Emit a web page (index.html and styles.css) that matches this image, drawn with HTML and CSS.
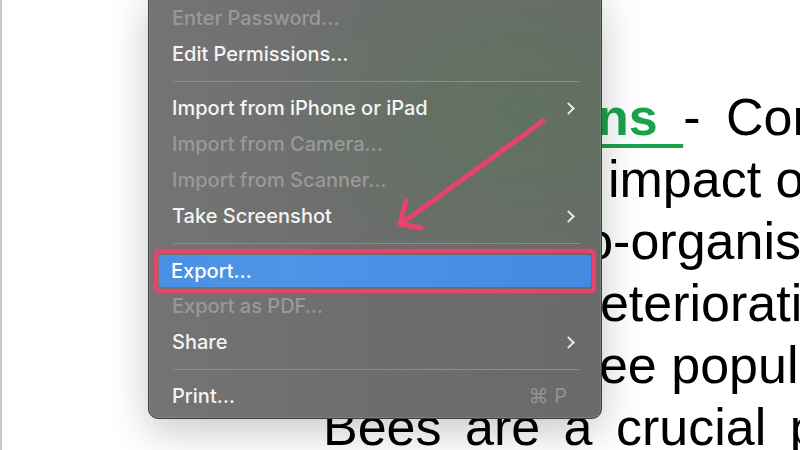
FILE: index.html
```html
<!DOCTYPE html>
<html lang="en">
<head>
<meta charset="utf-8">
<title>Export menu</title>
<link rel="stylesheet" href="styles.css">
</head>
<body>
<div class="screen">
  <div class="doc">
    <div class="ln l1"><span class="hl">ns&nbsp;</span>- Conclusions</div>
    <div class="ln l2">impact on</div>
    <div class="ln l3">micro-organisms</div>
    <div class="ln l4">deterioration</div>
    <div class="ln l5">bee population</div>
    <div class="ln l6">Bees are a crucial part</div>
  </div>

  <div class="menu">
    <div class="item off">Enter Password…</div>
    <div class="item">Edit Permissions…</div>
    <div class="sep"></div>
    <div class="item sub">Import from iPhone or iPad<span class="chev"></span></div>
    <div class="item off">Import from Camera…</div>
    <div class="item off">Import from Scanner…</div>
    <div class="item sub">Take Screenshot<span class="chev"></span></div>
    <div class="sep"></div>
    <div class="item active">Export…</div>
    <div class="item off">Export as PDF…</div>
    <div class="item sub">Share<span class="chev"></span></div>
    <div class="sep"></div>
    <div class="item">Print…<span class="key">⌘ P</span></div>
  </div>

  <svg class="arrow" width="800" height="450" viewBox="0 0 800 450">
    <g fill="none" stroke="#e8436c" stroke-width="5" stroke-linecap="round" stroke-linejoin="round">
      <path d="M541 121 L399 224"/>
      <path d="M404 201 L398 224 L419 228"/>
    </g>
  </svg>
</div>
</body>
</html>
```
FILE: styles.css
```css
* { box-sizing: border-box; }
html, body { margin: 0; padding: 0; }
body { background: #fff; }

.screen {
  position: relative;
  width: 800px;
  height: 450px;
  overflow: hidden;
  background: #fff;
  border-left: 2px solid #c8c8c8;
}

.doc {
  padding-top: 86px;
  font-family: "Liberation Sans", Arial, sans-serif;
  font-size: 52px;
  line-height: 62px;
  color: #000;
}
.ln { white-space: nowrap; }
.l1 { margin-left: 595px; word-spacing: 11px; }
.l2 { margin-left: 606px; }
.l3 { margin-left: 484px; }
.l4 { margin-left: 569px; }
.l5 { margin-left: 568px; }
.l6 { margin-left: 321px; word-spacing: 9px; }

.hl {
  color: #1ba24b;
  font-weight: bold;
  text-decoration: underline;
  text-decoration-thickness: 4px;
  text-underline-offset: 9px;
  text-decoration-color: #1ba24b;
}

.menu {
  position: absolute;
  left: 146px;
  top: -12px;
  width: 454px;
  height: 431px;
  padding-top: 11px;
  border: 1px solid #3e3e3e;
  border-radius: 10px;
  background:
    radial-gradient(ellipse 260px 200px at 82% 28%, rgba(80, 125, 80, 0.38), rgba(80, 125, 80, 0) 100%),
    linear-gradient(90deg, #747474 0%, #6d6d6d 50%, #6a6a6a 100%);
  box-shadow: 0 12px 40px rgba(0, 0, 0, 0.22), inset 0 0 0 1px rgba(255, 255, 255, 0.12);
  font-family: Inter, "Noto Sans", sans-serif;
  font-size: 20px;
  font-weight: 500;
  color: #f4f4f4;
}

.item {
  position: relative;
  height: 36px;
  display: flex;
  align-items: center;
  padding: 0 22px 0 22px;
  margin: 0 1px;
}
.item.off { color: #999; }

.chev {
  margin-left: auto;
  width: 9px;
  height: 9px;
  border-top: 2px solid #e6e6e6;
  border-right: 2px solid #e6e6e6;
  transform: rotate(45deg);
  margin-right: 5px;
}

.key {
  margin-left: auto;
  color: #939393;
  font-weight: 400;
  margin-right: 11px;
}

.sep {
  height: 18px;
  display: flex;
  align-items: center;
  padding: 0 22px 0 24px;
}
.sep::before {
  content: "";
  flex: 1;
  height: 1px;
  background: #8c8c8c;
}

.item.active {
  margin: 3px 10px 1px 10px;
  height: 32px;
  padding-left: 12px;
  background: linear-gradient(90deg, #4a8fe2 0%, #4e95e8 30%, #428ae2 100%);
  border-radius: 3px;
  color: #fff;
}
.item.active::after {
  content: "";
  position: absolute;
  left: -5px;
  right: -5px;
  top: -6px;
  bottom: -6px;
  border: 4px solid #e8436c;
  border-radius: 5px;
  box-shadow: 0 0 2px rgba(232, 67, 108, 0.7);
}

.arrow {
  position: absolute;
  left: 0;
  top: 0;
  pointer-events: none;
}
```
